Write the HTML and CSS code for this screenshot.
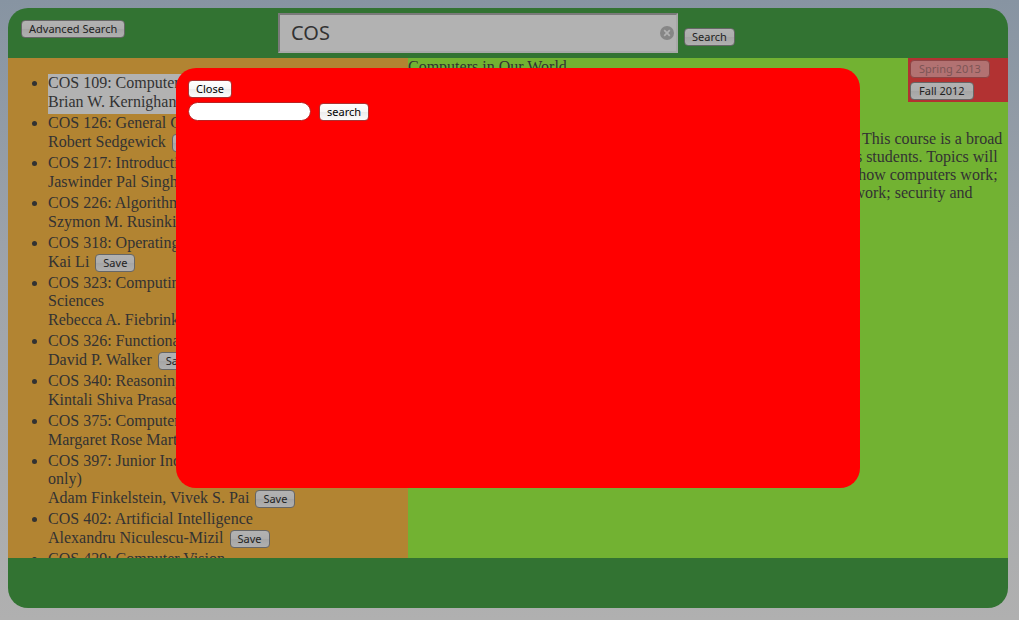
FILE: index.html
```html
<!DOCTYPE html>
<html lang="en">
<head>
<meta charset="utf-8">
<title>Course Search</title>
<link rel="stylesheet" href="styles.css">
</head>
<body>
<div class="page">
  <header class="header">
    <button class="btn advanced" type="button">Advanced Search</button>
    <form class="search">
      <div class="search-box">
        <input class="search-input" type="text" aria-label="Search courses" value="COS">
        <button class="clear" type="button" aria-label="Clear search">
          <svg width="14" height="14" viewBox="0 0 14 14"><circle cx="7" cy="7" r="7" fill="#868686"/><path d="M4.2 4.2l5.6 5.6M9.8 4.2l-5.6 5.6" stroke="#b2b2b2" stroke-width="1.7"/></svg>
        </button>
      </div>
      <button class="btn search-btn" type="button">Search</button>
    </form>
  </header>
  <main class="main">
    <ul class="courses">
      <li class="selected">COS 109: Computers in Our World<div class="teacher">Brian W. Kernighan <button class="btn" type="button">Save</button></div></li>
      <li>COS 126: General Computer Science<div class="teacher">Robert Sedgewick <button class="btn" type="button">Save</button></div></li>
      <li>COS 217: Introduction to Programming Systems<div class="teacher">Jaswinder Pal Singh <button class="btn" type="button">Save</button></div></li>
      <li>COS 226: Algorithms and Data Structures<div class="teacher">Szymon M. Rusinkiewicz <button class="btn" type="button">Save</button></div></li>
      <li>COS 318: Operating Systems<div class="teacher">Kai Li <button class="btn" type="button">Save</button></div></li>
      <li>COS 323: Computing for the Physical and Social Sciences<div class="teacher">Rebecca A. Fiebrink <button class="btn" type="button">Save</button></div></li>
      <li>COS 326: Functional Programming<div class="teacher">David P. Walker <button class="btn" type="button">Save</button></div></li>
      <li>COS 340: Reasoning about Computation<div class="teacher">Kintali Shiva Prasad <button class="btn" type="button">Save</button></div></li>
      <li>COS 375: Computer Architecture and Organization<div class="teacher">Margaret Rose Martonosi <button class="btn" type="button">Save</button></div></li>
      <li>COS 397: Junior Independent Work (B.S.E. candidates only)<div class="teacher">Adam Finkelstein, Vivek S. Pai <button class="btn" type="button">Save</button></div></li>
      <li>COS 402: Artificial Intelligence<div class="teacher">Alexandru Niculescu-Mizil <button class="btn" type="button">Save</button></div></li>
      <li>COS 429: Computer Vision</li>
    </ul>
    <section class="detail">
      <div class="terms">
        <button class="btn" type="button" disabled>Spring 2013</button>
        <button class="btn" type="button">Fall 2012</button>
      </div>
      <h1 class="title">Computers in Our World</h1>
      <p class="description">Computers are all around us. How do they affect the world we live in? This course is a broad introduction to computing technology for humanities &amp; social sciences students. Topics will be drawn from current issues and events, &amp; will include discussion of how computers work; what programming is and why it is hard; how the Internet &amp; the Web work; security and privacy.</p>
    </section>
  </main>
  <footer class="footer"></footer>
</div>
<div class="modal" role="dialog" aria-label="Advanced search">
  <button class="btn bright" type="button">Close</button>
  <form class="modal-form">
    <input class="modal-input" type="text" aria-label="Advanced search text">
    <button class="btn bright" type="button">search</button>
  </form>
</div>
</body>
</html>
```
FILE: styles.css
```css
* { box-sizing: border-box; }

body {
  margin: 0;
  height: 100vh;
  padding: 8px 11px 12px 8px;
  background: linear-gradient(#8794a2, #9fa4ab 45%, #b0b0b0);
  color: #323232;
  font: 16px/18px "Liberation Serif", "Times New Roman", serif;
}

.page {
  display: grid;
  grid-template-rows: 50px minmax(0, 1fr) 50px;
  height: 100%;
  border-radius: 20px;
  overflow: hidden;
}

.header {
  display: grid;
  grid-template-columns: 1fr auto 1fr;
  align-items: center;
  padding: 0 16px 0 13px;
  background: #327332;
}

.btn {
  height: 18px;
  margin: 0;
  padding: 0 7px;
  border: 1px solid #666;
  border-radius: 4px;
  background: linear-gradient(#b2b2b2, #adadad 50%, #a5a5a5 51%, #b0b0b0);
  color: #222;
  font: 11px/16px "Noto Sans", "Lucida Grande", sans-serif;
  white-space: nowrap;
}

.btn:disabled {
  border-color: #8d4545;
  background: #b27272;
  color: #7c5555;
}

.bright {
  border-color: #a33;
  background: linear-gradient(#fff, #f7f7f7 50%, #ececec 51%, #fbfbfb);
  color: #000;
}

.advanced {
  justify-self: start;
  margin-bottom: 8px;
}

.search {
  display: flex;
  align-items: center;
  gap: 6px;
}

.search-box {
  position: relative;
  width: 400px;
}

.search-input {
  display: block;
  width: 100%;
  height: 40px;
  padding: 0 32px 2px 11px;
  border: 2px solid;
  border-color: #7a7a7a #a8a8a8 #a8a8a8 #7a7a7a;
  background: #b2b2b2;
  color: #323232;
  font: 20px "Noto Sans", "Lucida Grande", sans-serif;
}

.clear {
  position: absolute;
  top: 13px;
  right: 4px;
  width: 14px;
  height: 14px;
  padding: 0;
  border: 0;
  background: none;
}

.clear svg { display: block; }

.search-btn { margin-top: 7px; }

.main {
  display: grid;
  grid-template-columns: 2fr 3fr;
  min-height: 0;
}

.courses {
  margin: 0;
  padding: 16px 0 0 40px;
  background: #b28432;
  overflow: hidden;
}

.selected { background: #b2b2b2; }

.teacher {
  display: flex;
  align-items: center;
  gap: 6px;
  height: 22px;
  padding-bottom: 2px;
}

.teacher .btn { margin-top: 2px; }

.detail {
  background: #72b232;
  overflow: hidden;
}

.terms {
  float: right;
  display: flex;
  flex-direction: column;
  align-items: flex-start;
  gap: 4px;
  width: 100px;
  padding: 2px;
  background: #b23232;
}

.terms .btn { padding: 0 8px; }

.title {
  margin: 0 0 54px;
  font-size: 16px;
  font-weight: normal;
}

.description { margin: 0; }

.footer { background: #327332; }

.modal {
  position: absolute;
  top: 68px;
  right: 159px;
  bottom: 132px;
  left: 176px;
  display: flex;
  flex-direction: column;
  align-items: flex-start;
  gap: 4px;
  padding: 12px;
  border-radius: 20px;
  background: #f00;
}

.modal-form {
  display: flex;
  align-items: center;
  gap: 8px;
}

.modal-input {
  width: 123px;
  height: 19px;
  padding: 0 8px;
  border: 1px solid #b22;
  border-radius: 10px;
  background: #fff;
  font: 11px "Noto Sans", "Lucida Grande", sans-serif;
}
```
